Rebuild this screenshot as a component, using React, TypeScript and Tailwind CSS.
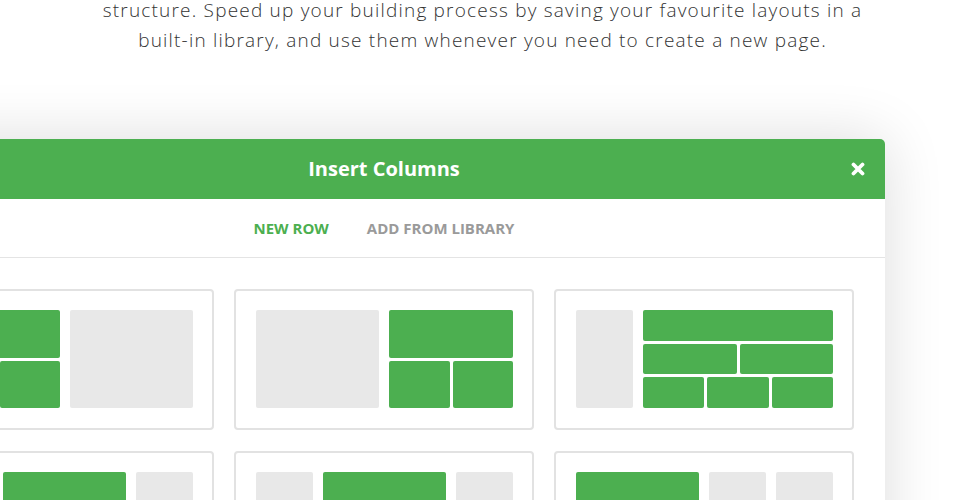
import React from 'react';

const G = 'bg-[#4caf50] rounded-[2px]';
const L = 'bg-[#e8e8e8] rounded-[2px]';

const Card: React.FC<{ children: React.ReactNode }> = ({ children }) => (
  <div className="w-[300px] h-[141px] shrink-0 border-2 border-[#e2e2e2] rounded-[4px] pl-5 pr-[19px] pt-[19px] pb-5 flex">
    <div className="flex w-full h-[98px] gap-[10px]">{children}</div>
  </div>
);

const App: React.FC = () => {
  return (
    <div className="h-[500px] w-[965px] overflow-hidden bg-white relative">
      <div
        className="text-center text-[19px] tracking-[1.2px] text-[#333] font-light whitespace-nowrap"
        style={{ fontFamily: '"Open Sans", "Liberation Sans", sans-serif' }}
      >
        <p className="leading-[20px]">
          structure. Speed up your building process by saving your favourite layouts in a
        </p>
        <p className="leading-[31px] mt-[5px]">
          built-in library, and use them whenever you need to create a new page.
        </p>
      </div>

      <div
        className="ml-[-117px] mt-[83px] w-[1002px] bg-white rounded-t-[5px] shadow-[0_0_60px_rgba(0,0,0,0.14)]"
        style={{ fontFamily: '"Open Sans", "Liberation Sans", sans-serif' }}
      >
        <div className="h-[60px] bg-[#4caf50] rounded-t-[5px] relative flex items-center justify-center">
          <span className="text-white font-bold text-[20px]">Insert Columns</span>
          <svg
            className="absolute right-[20px] top-[23px]"
            width="14"
            height="14"
            viewBox="0 0 14 14"
          >
            <path d="M2.5 2.5 L11.5 11.5 M11.5 2.5 L2.5 11.5" stroke="white" strokeWidth="3.8" strokeLinecap="round" />
          </svg>
        </div>

        <div className="h-[59px] border-b border-[#e4e4e4] flex items-center justify-center gap-[38px] text-[15px] font-bold uppercase">
          <span className="text-[#4caf50]">New Row</span>
          <span className="text-[#9a9a9a]">Add from Library</span>
        </div>

        <div className="px-[31px] pt-[31px] flex flex-col gap-[21px]">
          <div className="flex gap-[20px]">
            <Card>
              <div className="w-[124px] flex flex-col gap-[3px]">
                <div className={`${G} h-[48px]`} />
                <div className="flex-1 flex gap-[3px]">
                  <div className={`${G} flex-1`} />
                  <div className={`${G} flex-1`} />
                </div>
              </div>
              <div className={`${L} flex-1`} />
            </Card>
            <Card>
              <div className={`${L} flex-1`} />
              <div className="w-[124px] flex flex-col gap-[3px]">
                <div className={`${G} h-[48px]`} />
                <div className="flex-1 flex gap-[3px]">
                  <div className={`${G} flex-1`} />
                  <div className={`${G} flex-1`} />
                </div>
              </div>
            </Card>
            <Card>
              <div className={`${L} w-[57px]`} />
              <div className="flex-1 flex flex-col gap-[3px]">
                <div className={`${G} flex-1`} />
                <div className="flex-1 flex gap-[3px]">
                  <div className={`${G} flex-1`} />
                  <div className={`${G} flex-1`} />
                </div>
                <div className="flex-1 flex gap-[3px]">
                  <div className={`${G} flex-1`} />
                  <div className={`${G} flex-1`} />
                  <div className={`${G} flex-1`} />
                </div>
              </div>
            </Card>
          </div>

          <div className="flex gap-[20px]">
            <Card>
              <div className={`${L} w-[57px]`} />
              <div className={`${G} flex-1`} />
              <div className={`${L} w-[57px]`} />
            </Card>
            <Card>
              <div className={`${L} w-[57px]`} />
              <div className={`${G} flex-1`} />
              <div className={`${L} w-[57px]`} />
            </Card>
            <Card>
              <div className={`${G} flex-1`} />
              <div className={`${L} w-[57px]`} />
              <div className={`${L} w-[57px]`} />
            </Card>
          </div>
        </div>
      </div>
    </div>
  );
};

export default App;
